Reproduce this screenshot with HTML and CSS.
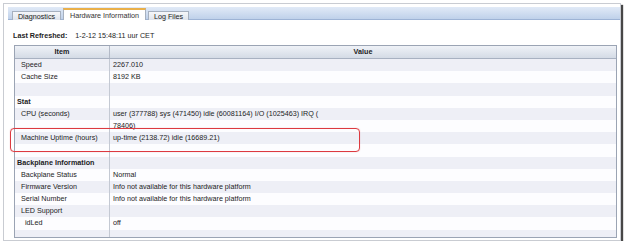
FILE: index.html
```html
<!DOCTYPE html>
<html lang="en">
<head>
<meta charset="UTF-8" />
<title>Hardware Information</title>
<link rel="stylesheet" href="styles.css">
</head>
<body>

<div class="window">
  <nav class="tabs">
    <span class="tab tab-diag">Diagnostics</span>
    <span class="tab tab-hw active">Hardware Information</span>
    <span class="tab tab-log">Log Files</span>
  </nav>

  <div class="panel">
    <p class="refreshed"><b>Last Refreshed:</b><span>1-2-12 15:48:11 uur CET</span></p>

    <div class="grid">
      <div class="head">
        <span class="item">Item</span>
        <span class="value">Value</span>
      </div>
      <div class="body">
        <div class="row"><span class="item">Speed</span><span class="value">2267.010</span></div>
        <div class="row"><span class="item">Cache Size</span><span class="value">8192 KB</span></div>
        <div class="row"><span class="item"></span><span class="value"></span></div>
        <div class="row group"><span class="item">Stat</span><span class="value"></span></div>
        <div class="row"><span class="item">CPU (seconds)</span><span class="value">user (377788) sys (471450) idle (60081164) I/O (1025463) IRQ (</span></div>
        <div class="row"><span class="item"></span><span class="value">78406)</span></div>
        <div class="row"><span class="item">Machine Uptime (hours)</span><span class="value">up-time (2138.72) idle (16689.21)</span></div>
        <div class="row"><span class="item"></span><span class="value"></span></div>
        <div class="row group"><span class="item">Backplane Information</span><span class="value"></span></div>
        <div class="row"><span class="item">Backplane Status</span><span class="value">Normal</span></div>
        <div class="row"><span class="item">Firmware Version</span><span class="value">Info not available for this hardware platform</span></div>
        <div class="row"><span class="item">Serial Number</span><span class="value">Info not available for this hardware platform</span></div>
        <div class="row"><span class="item">LED Support</span><span class="value"></span></div>
        <div class="row sub"><span class="item">idLed</span><span class="value">off</span></div>
        <div class="row filler"><span class="item"></span><span class="value"></span></div>
      </div>
    </div>
  </div>

  <div class="callout"></div>
</div>

</body>
</html>
```

FILE: styles.css
```css
:root {
  --text: #1c1c1c;
  --stripe: #eeeff6;
  --plain: #fdfdff;
  --line: #c4c9d3;
  --frame: #9ba4b4;
}

* {
  box-sizing: border-box;
}

body {
  margin: 0;
  background-color: #fff;
  font-family: "Liberation Sans", Arial, sans-serif;
  font-size: 7.2px;
  color: var(--text);
}

.window {
  position: relative;
  margin: 3px 0 0 3px;
  width: 618px;
  height: 238px;
  border: 1px solid #c9ccd2;
  box-shadow: 2px 2px 1px #474747;
  background-color: #fff;
  padding: 3px 0 0 4px;
}

/* tab strip */
.tabs {
  display: flex;
  align-items: flex-end;
  gap: 2px;
  height: 13px;
  padding-left: 4px;
  background: linear-gradient(#e1eaf7, #bfd1ea);
  border-bottom: 1px solid #9db3d5;
}

.tab {
  display: flex;
  justify-content: center;
  align-items: center;
  height: 9px;
  margin-bottom: -1px;
  border: 1px solid #a6b0bf;
  border-bottom: none;
  background: linear-gradient(#f6f7fa, #dfe4ec);
  color: #222;
}

.tab-diag { width: 49px; }
.tab-hw { width: 83px; }
.tab-log { width: 41px; }

.tab.active {
  height: 12px;
  background: #fff;
  border-top: 2px solid #eab04a;
  color: #333;
}

/* content */
.panel {
  padding: 11px 0 0 5px;
}

.refreshed {
  margin: 0;
  height: 10px;
  line-height: 10px;
  display: flex;
  gap: 8px;
}

.grid {
  margin: 4px 0 0 1px;
  width: 603px;
  height: 193px;
  border: 1px solid var(--frame);
  display: flex;
  flex-direction: column;
}

.head,
.row {
  display: grid;
  grid-template-columns: 95px 1fr;
}

.head {
  height: 13px;
  line-height: 12px;
  font-weight: bold;
  text-align: center;
  background: linear-gradient(#eff2f7, #d4dbe5);
  border-bottom: 1px solid #a8b1c1;
}

.head .item {
  border-right: 1px solid #b3bac7;
}

.body {
  flex: 1;
  display: flex;
  flex-direction: column;
}

.row {
  height: 12.2px;
  line-height: 12.2px;
  background-color: var(--plain);
  white-space: nowrap;
}

.row:nth-child(odd) {
  background-color: var(--stripe);
}

.row .item {
  padding-left: 6px;
  border-right: 1px solid var(--line);
}

.row .value {
  padding-left: 3px;
}

.row.group .item {
  padding-left: 2px;
  font-weight: bold;
}

.row.sub .item {
  padding-left: 10px;
}

.row.filler {
  flex: 1;
}

/* annotation drawn over the grid */
.callout {
  position: absolute;
  left: 6px;
  top: 124px;
  width: 350px;
  height: 24px;
  border: 1.5px solid #dc3a40;
  border-radius: 4px;
  box-shadow: 0 0 1px rgba(220, 58, 64, 0.5);
}
```
